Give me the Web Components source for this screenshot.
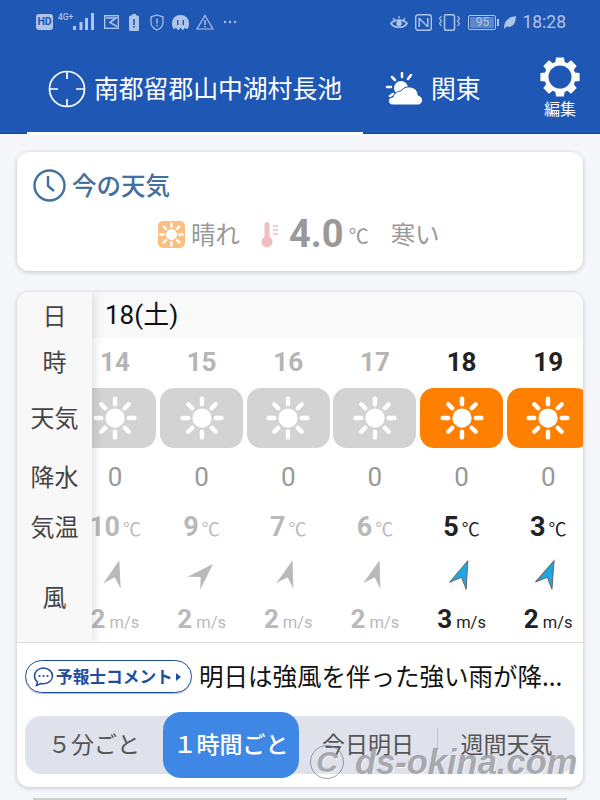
<!DOCTYPE html>
<html lang="ja"><head><meta charset="utf-8"><title>天気</title>
<style>
html,body{margin:0;padding:0;height:800px;overflow:hidden;background:#f5f7fb;font-family:"Noto Sans CJK JP","Noto Sans",sans-serif}
body{position:relative;display:flex;flex-direction:column}
</style></head><body>
<x-app-header></x-app-header>
<x-current></x-current>
<x-forecast></x-forecast>
<x-peek></x-peek>
<x-watermark></x-watermark>
<script>
const CJK="'Noto Sans CJK JP','Noto Sans',sans-serif", RB="Roboto,'Liberation Sans',sans-serif";
const sun=(fill,r=7)=>{let s=`<circle cx="16" cy="16" r="${r}" fill="${fill}"/>`;
 for(let a=0;a<360;a+=45)s+=`<line x1="16" y1="6" x2="16" y2="1.900" transform="rotate(${a} 16 16)" stroke="${fill}" stroke-width="3.200" stroke-linecap="round"/>`;return s};
const gear=()=>{const cx=20,cy=20,n=8,R=20,r=15.6;let d='';
 for(let i=0;i<n;i++){const a=i*2*Math.PI/n-Math.PI/2,hw=.2,lw=.3;
  const p=(rad,ang)=>`${(cx+rad*Math.cos(ang)).toFixed(2)} ${(cy+rad*Math.sin(ang)).toFixed(2)}`;
  d+=(i?'L':'M')+p(r,a-lw)+'L'+p(R,a-hw)+'L'+p(R,a+hw)+'L'+p(r,a+lw);}
 return d+'Z M20 8.500a11.500 11.500 0 1 0 0 23a11.500 11.500 0 1 0 0-23Z'};
class Base extends HTMLElement{html(h){this.attachShadow({mode:'open'}).innerHTML=h}}

class XStatus extends Base{connectedCallback(){const c='#aec4e8';this.html(`<style>
:host{display:flex;height:45px;align-items:flex-start;color:${c};position:relative;font-family:${RB}}
svg{display:block;flex:none}.l{display:flex;align-items:center;position:relative;margin-left:36px;margin-top:10px;height:24px}
.r{display:flex;align-items:center;margin-left:auto;margin-right:34px;margin-top:10px;height:24px}
.hd{width:17px;height:16px;background:${c};border-radius:3px;color:#1f57b5;font:700 10.5px/16px ${RB};text-align:center}
.g{position:relative;width:16px;height:20px;margin-left:5px;font:500 8.5px/8px ${RB}}
.g i{font-style:normal;position:absolute;left:0;top:1px}
.bat{width:28px;height:15px;border:1px solid ${c};border-radius:2px;box-sizing:border-box;padding:1px;margin-left:7px}
.bat b{display:block;background:#5f86c6;height:100%;border-radius:1px;font:400 12px/11px ${RB};color:${c};text-align:center}
.tip{width:2px;height:7px;background:${c};margin-left:1px;margin-right:4px}
.t{font:400 17.5px/24px ${RB};margin-left:6px}
</style>
<div class="l"><div class="hd">HD</div><div class="g"><i>4G+</i></div>
<svg width="22" height="20" viewBox="0 0 22 20" style="margin-left:-1px"><rect x="0" y="14" width="3" height="4" fill="${c}"/><rect x="6.5" y="10" width="3" height="8" fill="${c}"/><rect x="12" y="6" width="3" height="12" fill="${c}" /><rect x="18" y="1" width="3" height="17" fill="${c}"/></svg>
<svg width="15" height="14" viewBox="0 0 15 14" style="margin-left:9px"><rect x=".7" y=".7" width="13.600" height="12.600" fill="none" stroke="${c}" stroke-width="1.400"/><path d="M2 3h10L6 7.500l7 4" fill="none" stroke="${c}" stroke-width="1.600"/></svg>
<svg width="10" height="17" viewBox="0 0 10 17" style="margin-left:10px"><rect x="3" y="0" width="4" height="2" fill="${c}"/><rect y="1.5" width="10" height="15.5" rx="1.5" fill="${c}"/><rect x="4.2" y="5" width="1.6" height="6" fill="#1f57b5"/><rect x="4.2" y="12" width="1.6" height="1.6" fill="#1f57b5"/></svg>
<svg width="14" height="17" viewBox="0 0 14 17" style="margin-left:11px"><path d="M7 1l6 2v5.500c0 3.500-2.500 6-6 7.500-3.500-1.500-6-4-6-7.500V3z" fill="none" stroke="${c}" stroke-width="1.200"/><rect x="6.300" y="4.500" width="1.400" height="5" fill="${c}"/><rect x="6.300" y="10.800" width="1.400" height="1.500" fill="${c}"/></svg>
<svg width="19" height="19" viewBox="0 0 19 19" style="margin-left:7px"><path d="M9.500 2a8 8 0 0 1 8.500 8.500c0 3-1 5.500-2 5.500s-1-1-2-1-1 2-2.200 2-1.300-2-2.300-2-1 2-2.300 2S6 15 5 15s-1 1-2 1-2-2.500-2-5.500A8 8 0 0 1 9.500 2z" fill="${c}"/><rect x="6" y="7" width="1.400" height="5" fill="#1f57b5"/><rect x="11.600" y="7" width="1.400" height="5" fill="#1f57b5"/></svg>
<svg width="18" height="16" viewBox="0 0 18 16" style="margin-left:6px"><path d="M9 1.500L17 15H1z" fill="none" stroke="${c}" stroke-width="1.200"/><rect x="8.300" y="6" width="1.400" height="5" fill="${c}"/><rect x="8.300" y="12" width="1.400" height="1.400" fill="${c}"/></svg>
<svg width="14" height="4" viewBox="0 0 14 4" style="margin-left:9px"><circle cx="2" cy="2" r="1.200" fill="${c}"/><circle cx="7" cy="2" r="1.200" fill="${c}"/><circle cx="12" cy="2" r="1.200" fill="${c}"/></svg></div>
<div class="r">
<svg width="18" height="15" viewBox="0 0 18 15"><path d="M1 8.500C4 4 14 4 17 8.500 14 13.500 4 13.500 1 8.500z" fill="none" stroke="${c}" stroke-width="1.700"/><circle cx="9" cy="8.500" r="2.700" fill="${c}"/><path d="M3 3l1.500 2M9 1v2.500M15 3l-1.500 2" stroke="${c}" stroke-width="1.300"/></svg>
<svg width="17" height="17" viewBox="0 0 17 17" style="margin-left:7px"><rect x=".7" y=".7" width="15.600" height="15.600" rx="2.500" fill="none" stroke="${c}" stroke-width="1.400"/><path d="M3.500 4v9h1.500V6l7 7h1.500V4H12v7L5 4z" fill="${c}"/></svg>
<svg width="23" height="17" viewBox="0 0 23 17" style="margin-left:6px"><rect x="6.500" y=".8" width="10" height="15.400" rx="1.500" fill="none" stroke="${c}" stroke-width="1.500"/><path d="M3.500 2L1.500 4.500l2 2.500-2 2.500 2 2.500M19.500 2l2 2.500-2 2.500 2 2.500-2 2.500" fill="none" stroke="${c}" stroke-width="1.200"/></svg>
<div class="bat"><b>95</b></div><div class="tip"></div>
<svg width="13" height="13" viewBox="0 0 13 13"><path d="M1 12C1 5 5 1 13 0c0 8-4 12-9.500 10.500L1 13z" fill="${c}"/></svg>
<div class="t">18:28</div></div>`)}}
customElements.define('x-status',XStatus);

class XAppHeader extends Base{connectedCallback(){this.html(`<style>
:host{display:block;height:134px;background:#1f57b5;color:#fff;flex:none;box-sizing:border-box;border-bottom:1px solid #184594;overflow:visible}
.nav{display:flex;height:89px;padding-left:27px}
.tab{display:flex;align-items:center;height:89px;box-sizing:border-box;font:400 24.800px/1 ${CJK};white-space:nowrap;padding-bottom:3px}
.tab svg{margin-top:3px}
.a{width:336px;border-bottom:3px solid #fff;padding-left:21px;position:relative;z-index:1;height:90px}
.b{width:167px;padding-left:22px;padding-bottom:5px}
svg{display:block;flex:none}
.edit{width:60px;display:flex;flex-direction:column;align-items:center;padding-top:12px;font:400 16px/17px ${CJK}}
.edit svg{margin-bottom:3px}
</style><x-status></x-status><div class="nav">
<div class="tab a"><svg width="38" height="38" viewBox="0 0 38 38" style="margin-right:8px"><circle cx="19" cy="19" r="17.500" fill="none" stroke="#fff" stroke-width="1.700"/><path d="M19 1v8M19 29v8M1 19h9M28 19h9" stroke="#fff" stroke-width="1.700"/></svg>南都留郡山中湖村長池</div>
<div class="tab b"><svg width="38" height="34" viewBox="0 0 38 34" style="margin-right:8px"><circle cx="16" cy="16" r="7" fill="#fff"/><g stroke="#fff" stroke-width="2.500" stroke-linecap="round"><line x1="2" y1="15" x2="6" y2="15"/><line x1="7" y1="5" x2="10" y2="8"/><line x1="17" y1="1" x2="17" y2="5"/><line x1="26" y1="3" x2="23" y2="7"/><line x1="5" y1="24" x2="8" y2="22"/></g><path d="M8 33c-3 0-4.500-2-4.500-4S5 25 8 25c1-4 5-6 8-6 2-3 5-4.500 9-4 5 .500 8 4 8 8 3 1 4.500 3 4.500 5.500S35 33 33 33z" fill="#fff" stroke="#1f57b5" stroke-width="1"/></svg>関東</div>
<div class="edit"><svg width="40" height="40" viewBox="0 0 40 40"><path fill="#fff" fill-rule="evenodd" d="${gear()}"/></svg>編集</div>
</div>`)}}
customElements.define('x-app-header',XAppHeader);

class XCard extends Base{connectedCallback(){this.html(`<style>
:host{display:block;margin:0 17px;background:#fff;border-radius:12px;box-shadow:0 1px 5px rgba(0,0,0,.22);overflow:hidden;flex:none}
</style><slot></slot>`)}}
customElements.define('x-card',XCard);

class XCurrent extends Base{connectedCallback(){this.html(`<style>
:host{display:block;margin-top:18px;flex:none}
x-card{height:119px}
.title{display:flex;align-items:center;padding:16px 0 0 16px;color:#44709e;font:500 24.500px/34px ${CJK}}
.title svg{margin-right:6px}
.now{display:flex;align-items:center;height:40px;margin-top:12px;padding-left:141px;color:#999;font:400 24.500px/40px ${CJK};white-space:nowrap}
.ic{width:27px;height:27px;background:#fbbf82;border-radius:5px;display:flex;align-items:center;justify-content:center;margin-right:6px}
.v{font:700 38px/40px ${RB};margin:0 5px 0 8px}
.u{font:400 20px/1 ${CJK};margin-top:4px;margin-right:22px}
</style><x-card><div class="title"><svg width="33" height="33" viewBox="0 0 33 33"><circle cx="16.500" cy="16.500" r="15" fill="none" stroke="#44709e" stroke-width="2.400"/><path d="M15 7v10l6 5" fill="none" stroke="#44709e" stroke-width="2.400"/></svg>今の天気</div>
<div class="now"><span class="ic"><svg width="25" height="25" viewBox="0 0 32 32">${sun('#fff')}</svg></span>晴れ<svg width="20" height="27" viewBox="0 0 20 27" style="margin-left:21px"><path d="M6 1a2.500 2.500 0 0 1 2.500 2.500V16a5.500 5.500 0 1 1-5 0V3.500A2.500 2.500 0 0 1 6 1z" fill="#f0bdc0"/><path d="M12 5h5M12 9h5M12 13h5" stroke="#f0bdc0" stroke-width="1.500"/></svg><span class="v">4.0</span><span class="u">℃</span>寒い</div></x-card>`)}}
customElements.define('x-current',XCurrent);

class XCell extends Base{connectedCallback(){
 const k=this.getAttribute('kind'),on=this.hasAttribute('on'),v=this.getAttribute('v')||'',rot=this.getAttribute('rot')||0;
 const col=on?'#222':'#b9b9b9';let body='';
 if(k=='hour')body=`<b class="h">${v}</b>`;
 if(k=='wx')body=`<div class="tile"><svg width="44" height="44" viewBox="0 0 32 32">${sun('#fff')}</svg></div>`;
 if(k=='rain')body=`<span class="z">${v}</span>`;
 if(k=='temp')body=`<span class="n"><b>${v}</b><span>℃</span></span>`;
 if(k=='wind')body=`<div class="w"><svg width="32" height="32" viewBox="-16 -16 32 32"><polygon points="5.800,-14.300 -12.500,7.300 -.5,2.300 4.200,14.300" transform="rotate(${rot})" fill="${on?'#1ea7e8':'#b9b9b9'}" stroke="${on?'#666':'none'}" stroke-width="1"/></svg><span class="sp"><b>${v}</b><span>m/s</span></span></div>`;
 this.html(`<style>:host{display:flex;align-items:center;justify-content:center;height:100%;white-space:nowrap;color:${col}}
 .h{font:700 26px/1 ${RB};color:${on?'#222':'#b5b5b5'}}
 .z{font:400 26px/1 ${RB};color:#999}
 .tile{width:83px;height:60px;border-radius:14px;display:flex;align-items:center;justify-content:center;background:${on?'#ff8000':'#d3d3d3'}}
 .n{display:flex;align-items:baseline}.n b{font:700 27px/1 ${RB}}.n span{font:400 18px/1 ${CJK};margin-left:3px}
 .w{display:flex;flex-direction:column;align-items:center;height:90px}.w svg{margin-top:7px}.sp{display:flex;align-items:baseline;margin-top:15px}
 .sp b{font:700 26px/1 ${RB}}.sp span{font:400 16.500px/1 ${RB};margin-left:4px}
 </style>${body}`)}}
customElements.define('x-cell',XCell);

class XForecast extends Base{connectedCallback(){
 const hrs=[14,15,16,17,18,19],rain=[0,0,0,0,0,0],t=[10,9,7,6,5,3],s=[2,2,2,2,3,2],r=[-6,23,-5,-5,0,1];
 const row=(h,k,f,a)=>`<div class="row" style="height:${h}px">${hrs.map((x,i)=>`<x-cell kind="${k}" ${i>3?'on':''} v="${f?f[i]:''}" rot="${a?a[i]:0}"></x-cell>`).join('')}</div>`;
 this.html(`<style>
:host{display:block;margin-top:21px;flex:none}
x-card{height:495px;position:relative}
.grid{display:flex;height:350px;border-bottom:1px solid #dcdcdc}
.lab{width:75px;flex:none;background:#f8f8f8;box-shadow:2px 0 10px rgba(0,0,0,.13);clip-path:inset(0 -14px 0 0);position:relative;z-index:1;color:#444;font:400 24px/1 ${CJK};text-align:center}
.lab div{display:flex;align-items:center;justify-content:center}
.main{flex:1;min-width:0;overflow:hidden}
.date{height:46px;background:#f9f9f9;color:#111;font:400 26px/42px ${RB};padding-left:13px}
.date span{font-family:${CJK}}
.rows{margin-left:-20.400px;width:520px}
.row{display:grid;grid-template-columns:repeat(6,86.670px)}
.c{display:flex;align-items:center;box-sizing:border-box;height:70px;padding:0 0 3px 8px}
.pill{display:flex;align-items:center;box-sizing:border-box;width:167px;height:33px;border:1.500px solid #1f4d9a;border-radius:17px;padding-left:7px;color:#1f4fa0;font:700 16.700px/1 ${CJK};white-space:nowrap;box-shadow:0 1px 1px rgba(31,77,154,.4)}
.pill svg{margin-right:2px;flex:none}
.msg{margin-left:7px;font:400 24.500px/1 ${CJK};color:#111;white-space:nowrap}
.seg{position:relative;display:flex;align-items:center;margin:3px 8px 0;height:58px;background:#dfe2ea;border-radius:16px;color:#555;font:400 23px/1 ${CJK}}
.seg span{display:block;text-align:center;white-space:nowrap;padding-bottom:3px}
.on{position:relative;width:136px;height:66px;flex:none;background:#3f87e5;color:#fff;font-weight:500;border-radius:18px;display:flex!important;align-items:center;justify-content:center;box-sizing:border-box}
.div{width:1px;height:34px;background:#bfc3cc;flex:none}
</style><x-card><div class="grid">
<div class="lab"><div style="height:45px">日</div><div style="height:47px">時</div><div style="height:66px">天気</div><div style="height:51px">降水</div><div style="height:50px">気温</div><div style="height:89px">風</div></div>
<div class="main"><div class="date">18(<span>土</span>)</div><div class="rows">${row(47,'hour',hrs)}${row(66,'wx')}${row(51,'rain',rain)}${row(50,'temp',t)}${row(90,'wind',s,r)}</div></div></div>
<div class="c"><div class="pill"><svg width="21" height="21" viewBox="0 0 21 21"><path d="M10.500 2C5.500 2 1.500 5.500 1.500 10c0 2.500 1.200 4.500 3 6l-1 3.500 4.500-2c.8.200 1.600.3 2.500.3 5 0 9-3.500 9-7.800S15.500 2 10.500 2z" fill="none" stroke="#1f4d9a" stroke-width="1.500"/><circle cx="6.500" cy="10" r="1.100" fill="#1f4d9a"/><circle cx="10.500" cy="10" r="1.100" fill="#1f4d9a"/><circle cx="14.500" cy="10" r="1.100" fill="#1f4d9a"/></svg>予報士コメント<svg width="8" height="10" viewBox="0 0 8 10" style="margin-left:2px"><path d="M1 1l5 4-5 4z" fill="#1f4d9a"/></svg></div><div class="msg">明日は強風を伴った強い雨が降...</div></div>
<div class="seg"><span style="width:138px">５分ごと</span><span class="on">１時間ごと</span><span style="width:138px">今日明日</span><i class="div"></i><span style="width:137px">週間天気</span></div>
</x-card>`)}}
customElements.define('x-forecast',XForecast);

class XPeek extends Base{connectedCallback(){this.html(`<style>:host{display:block;height:3px;margin:11px 33px 0;background:#cfcfcf;flex:none}</style>`)}}
customElements.define('x-peek',XPeek);

class XWatermark extends Base{connectedCallback(){this.html(`<style>
:host{position:absolute;left:310px;top:745px;display:flex;align-items:center;height:34px;white-space:nowrap;pointer-events:none;font:italic 700 34.500px/34px 'Liberation Sans',sans-serif;color:rgba(130,133,140,.66);text-shadow:1px 1px 0 rgba(255,255,255,.6)}
.c{width:32px;height:32px;border:1px solid rgba(120,125,135,.75);border-radius:50%;font-size:30px;line-height:32px;text-align:center;margin-right:11px;flex:none}
</style><span class="c">C</span><span>ds-okina.com</span>`)}}
customElements.define('x-watermark',XWatermark);
</script></body></html>
